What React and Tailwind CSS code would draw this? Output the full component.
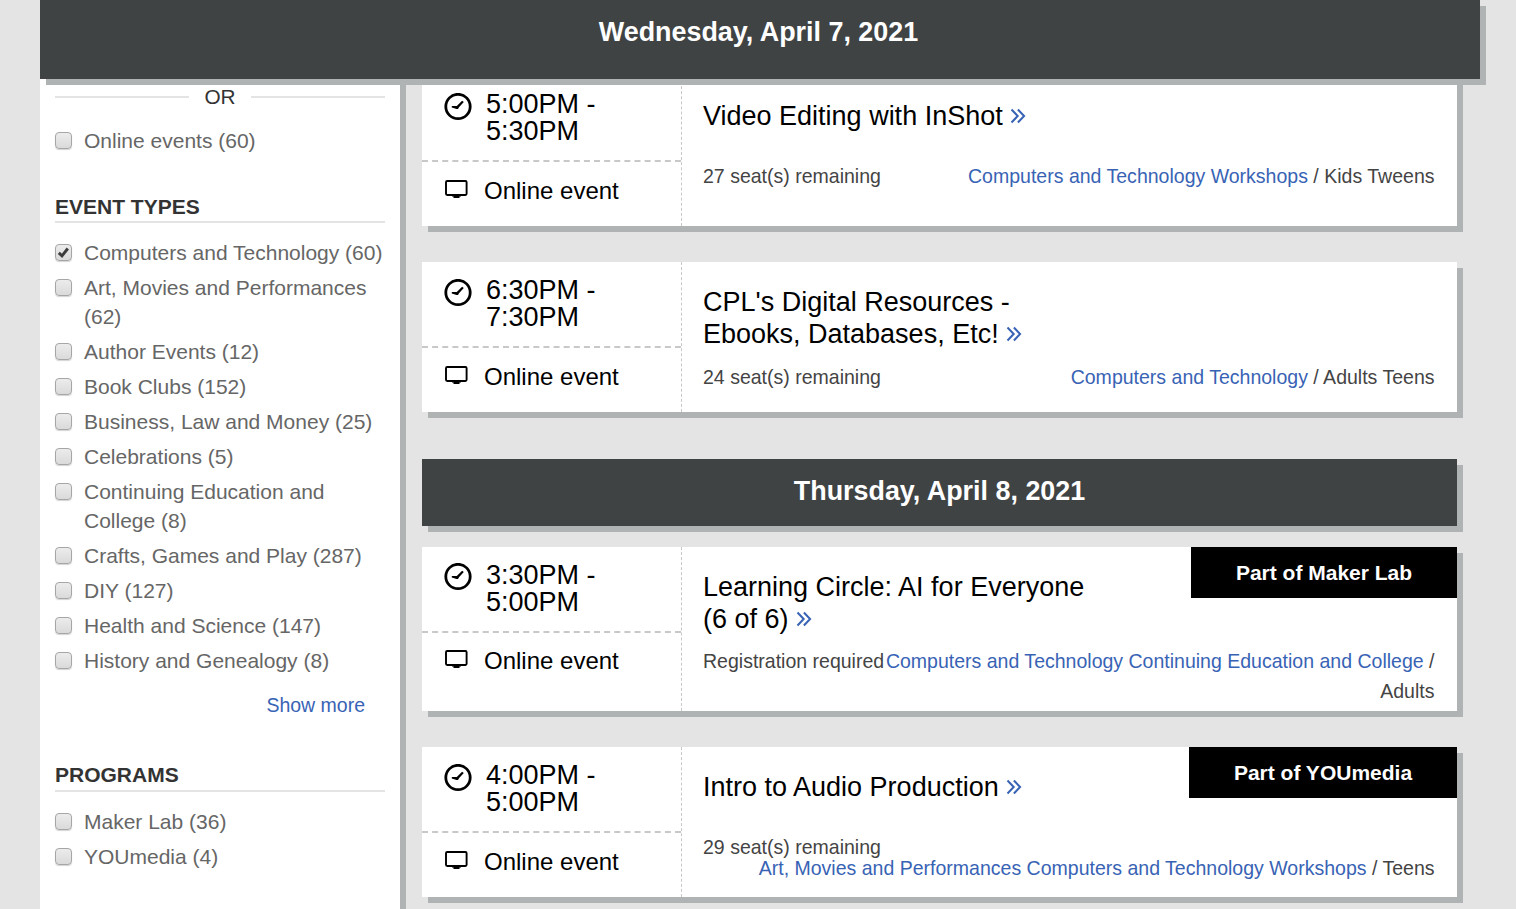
function ClockIcon({ className }) {
  return (
    <svg className={"h-7 w-7 shrink-0 " + className} viewBox="0 0 28 28" fill="none">
      <circle cx="14" cy="13.500" r="12.2" stroke="#000" strokeWidth="2.8" />
      <path d="M7.800 13h5l5.300-5.200 1.700 1.300-4.600 5-1.200 1.900h-1.500l-4.700-1.500z" fill="#000" />
    </svg>
  );
}

function MonitorIcon({ className }) {
  return (
    <svg className={"h-[19px] w-[23px] shrink-0 " + className} viewBox="0 0 23 19" fill="none">
      <rect x="1" y="1" width="20.600" height="14" rx="1.2" stroke="#000" strokeWidth="1.9" />
      <path d="M7 15h9v1.600h-1.500v1.400H8.500v-1.400H7z" fill="#000" />
    </svg>
  );
}

function Chevrons() {
  return (
    <svg className="ml-[7px] inline-block h-4 w-4 align-[1px]" viewBox="0 0 16 16" fill="none" stroke="#3863b5" strokeWidth="2">
      <path d="M1.500 1.500l6.200 6.500-6.200 6.500M7.900 1.500l6.200 6.500-6.200 6.500" />
    </svg>
  );
}

function CheckItem({ children, checked }) {
  return (
    <label className="flex items-start gap-3 text-[21px] leading-[29px] text-[#666]">
      <span className="mt-[6px] flex h-[17px] w-[17px] shrink-0 items-center justify-center rounded-[4px] border border-[#a6a6a6] bg-linear-to-b from-[#ececec] to-[#dadada] shadow-[0_1px_1px_#d4d4d4]">
        {checked && (
          <svg className="h-[13px] w-[13px]" viewBox="0 0 13 13" fill="none">
            <path d="M1.800 6.900l3.200 3L10.800 2.500" stroke="#3c3c3c" strokeWidth="2.900" />
          </svg>
        )}
      </span>
      <span>{children}</span>
    </label>
  );
}

function SectionTitle({ children, className }) {
  return (
    <h2 className={"border-b-2 border-[#e4e4e4] text-[21px] leading-[28px] font-bold text-[#333] " + className}>
      {children}
    </h2>
  );
}

function DateBar({ children, className }) {
  return (
    <div className={"bg-[#3f4343] text-center text-[26.9px] font-bold text-white shadow-[6px_6px_0_#afb3b3] " + className}>
      {children}
    </div>
  );
}

function EventCard({ time, title, seats, links, audience, badge, badgeWidth, className, stacked, raised }) {
  return (
    <article className={"relative flex shrink-0 bg-white shadow-[6px_6px_0_#afb3b3] " + className}>
      <div className="w-[259px] shrink-0 text-black">
        <div className="flex h-[86px] border-b-2 border-dashed border-[#c8c8c8] pl-[22px]">
          <ClockIcon className={raised ? "mt-4" : "mt-[17px]"} />
          <div className="mt-[15px] ml-[14px] text-[27px] leading-[27px]">
            {time[0]} -<br />
            {time[1]}
          </div>
        </div>
        <div className="flex pl-[23px]">
          <MonitorIcon className={raised ? "mt-[17px]" : "mt-[18px]"} />
          <div className={"ml-4 text-[24px] leading-[30px] " + (raised ? "mt-[13px]" : "mt-[14px]")}>Online event</div>
        </div>
      </div>
      <div className="flex-1 border-l border-dashed border-[#c8c8c8] pt-6 pr-[22.5px] pl-[21px]">
        <h3 className={"min-h-[49px] text-[27px] leading-8 text-black " + (raised ? "mb-[11px]" : "mb-3")}>
          {title.map((line, i) => (
            <span key={line} className="block h-8 whitespace-nowrap">
              {line}
              {i === title.length - 1 && <Chevrons />}
            </span>
          ))}
        </h3>
        <div className={"flex text-[19.53px] leading-[30px] text-[#444] " + (stacked ? "flex-col" : "justify-between")}>
          <div className="shrink-0 whitespace-nowrap">{seats}</div>
          <div className={"text-right " + (stacked ? "-mt-[9px]" : "")}>
            <span className="text-[#3863b5]">{links}</span> / {audience}
          </div>
        </div>
      </div>
      {badge && (
        <div className={"absolute top-0 right-0 h-[51px] bg-black text-center text-[21px] leading-[51px] font-bold text-white " + badgeWidth}>
          {badge}
        </div>
      )}
    </article>
  );
}

const TYPES = [
  "Art, Movies and Performances (62)",
  "Author Events (12)",
  "Book Clubs (152)",
  "Business, Law and Money (25)",
  "Celebrations (5)",
  "Continuing Education and College (8)",
  "Crafts, Games and Play (287)",
  "DIY (127)",
  "Health and Science (147)",
  "History and Genealogy (8)",
];

export default function App() {
  return (
    <div className="flex h-[909px] w-[1516px] flex-col overflow-hidden bg-[#e4e4e4] px-10 font-['Liberation_Sans',Arial,sans-serif]">
      <DateBar className="relative z-10 h-[79px] w-[1440px] shrink-0 pr-[3px] leading-[65px]">Wednesday, April 7, 2021</DateBar>
      <div className="flex min-h-0 flex-1">
        <aside className="w-[360px] shrink-0 bg-white px-[15px] shadow-[6px_0_0_#afb3b3]">
          <div className="mt-[3px] flex h-[30px] items-center gap-[15px] text-[20.8px] text-[#333]">
            <span className="h-[2px] flex-1 bg-[#e4e4e4]" />
            <span>OR</span>
            <span className="h-[2px] flex-1 bg-[#e4e4e4]" />
          </div>
          <div className="mt-[14px]">
            <CheckItem>Online events (60)</CheckItem>
          </div>
          <div className="mt-[38px]">
            <SectionTitle className="h-[30px]">EVENT TYPES</SectionTitle>
          </div>
          <div className="mt-[15px] flex flex-col gap-[6px]">
            <CheckItem checked>Computers and Technology (60)</CheckItem>
            {TYPES.map((t) => (
              <CheckItem key={t}>{t}</CheckItem>
            ))}
          </div>
          <div className="mt-4 pr-5 text-right text-[19.5px] leading-[29px] text-[#3863b5]">Show more</div>
          <div className="mt-[41px]">
            <SectionTitle className="h-[31px]">PROGRAMS</SectionTitle>
          </div>
          <div className="mt-[15px] flex flex-col gap-[6px]">
            <CheckItem>Maker Lab (36)</CheckItem>
            <CheckItem>YOUmedia (4)</CheckItem>
          </div>
        </aside>
        <main className="-mt-[3px] ml-[22px] flex w-[1035px] shrink-0 flex-col">
          <EventCard className="h-[150px]" time={["5:00PM", "5:30PM"]} title={["Video Editing with InShot"]} seats="27 seat(s) remaining" links="Computers and Technology Workshops" audience="Kids Tweens" />
          <EventCard className="mt-9 h-[150px]" time={["6:30PM", "7:30PM"]} title={["CPL's Digital Resources -", "Ebooks, Databases, Etc!"]} seats="24 seat(s) remaining" links="Computers and Technology" audience="Adults Teens" />
          <DateBar className="mt-[47px] h-[67px] shrink-0 leading-[65px]">Thursday, April 8, 2021</DateBar>
          <EventCard className="mt-[21px] h-[164px]" time={["3:30PM", "5:00PM"]} title={["Learning Circle: AI for Everyone", "(6 of 6)"]} seats="Registration required" links="Computers and Technology Continuing Education and College" audience="Adults" badge="Part of Maker Lab" badgeWidth="w-[266px]" raised />
          <EventCard className="mt-9 h-[150px]" time={["4:00PM", "5:00PM"]} title={["Intro to Audio Production"]} seats="29 seat(s) remaining" links="Art, Movies and Performances Computers and Technology Workshops" audience="Teens" badge="Part of YOUmedia" badgeWidth="w-[268px]" stacked />
        </main>
      </div>
    </div>
  );
}
